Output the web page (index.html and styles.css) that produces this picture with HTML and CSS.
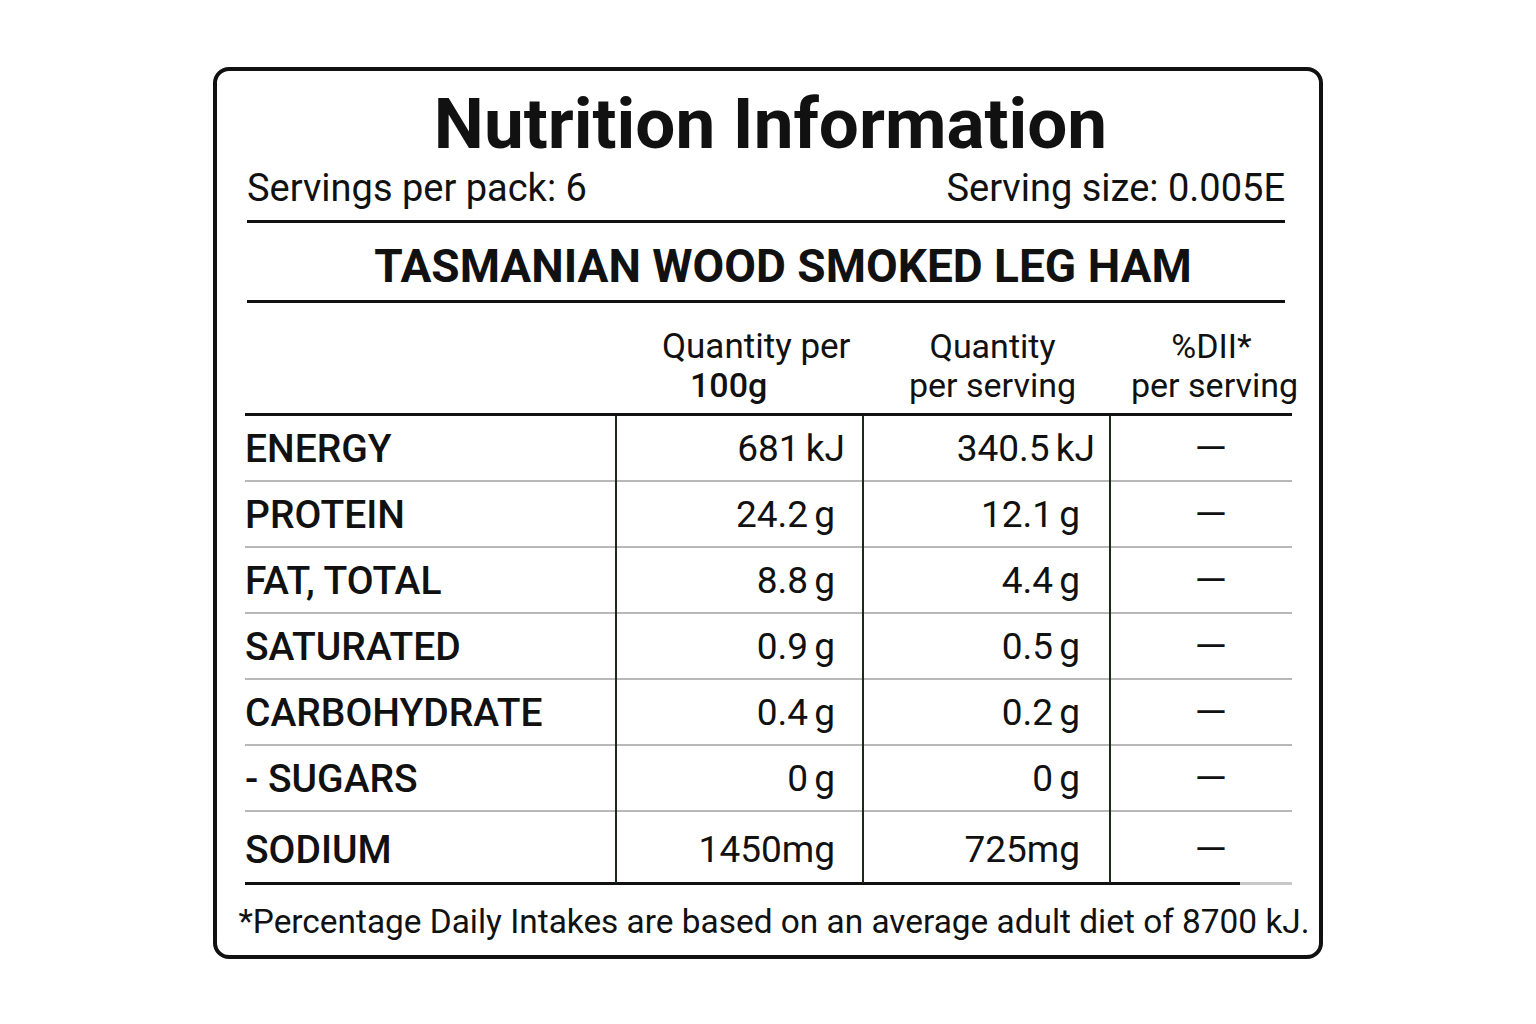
FILE: index.html
```html
<!DOCTYPE html>
<html lang="en">
<head>
<meta charset="utf-8">
<title>Nutrition Information</title>
<link rel="stylesheet" href="styles.css">
</head>
<body>
<div class="card">
  <h1 class="title">Nutrition Information</h1>
  <div class="servings"><span>Servings per pack: 6</span><span>Serving size: 0.005E</span></div>
  <div class="product">TASMANIAN WOOD SMOKED LEG HAM</div>
  <div class="table">
    <div class="head">
      <div></div>
      <div class="h h2"><span class="l1">Quantity per</span><span class="l2">100g</span></div>
      <div class="h h3">Quantity<br>per serving</div>
      <div class="h h4">%DII*<br>per serving</div>
    </div>
    <div class="row"><div class="lab">ENERGY</div><div class="v2 kj">681 kJ</div><div class="v3 kj">340.5 kJ</div><div class="v4"><span class="dash">–</span></div></div>
    <div class="row"><div class="lab">PROTEIN</div><div class="v2">24.2 g</div><div class="v3">12.1 g</div><div class="v4"><span class="dash">–</span></div></div>
    <div class="row"><div class="lab">FAT, TOTAL</div><div class="v2">8.8 g</div><div class="v3">4.4 g</div><div class="v4"><span class="dash">–</span></div></div>
    <div class="row"><div class="lab">SATURATED</div><div class="v2">0.9 g</div><div class="v3">0.5 g</div><div class="v4"><span class="dash">–</span></div></div>
    <div class="row"><div class="lab">CARBOHYDRATE</div><div class="v2">0.4 g</div><div class="v3">0.2 g</div><div class="v4"><span class="dash">–</span></div></div>
    <div class="row"><div class="lab">- SUGARS</div><div class="v2">0 g</div><div class="v3">0 g</div><div class="v4"><span class="dash">–</span></div></div>
    <div class="row last"><div class="lab">SODIUM</div><div class="v2">1450mg</div><div class="v3">725mg</div><div class="v4"><span class="dash">–</span></div></div>
    <div class="tline"></div>
  </div>
  <p class="note">*Percentage Daily Intakes are based on an average adult diet of 8700 kJ.</p>
</div>
</body>
</html>
```

FILE: styles.css
```css
body {
  margin: 0;
  background: #fff;
  font-family: Roboto, "Liberation Sans", Arial, sans-serif;
  color: #111;
}

.card {
  box-sizing: border-box;
  width: 1110px;
  height: 892px;
  margin: 67px 0 0 213px;
  border: 4px solid #111;
  border-radius: 16px;
  padding: 18px 27px 0 28px;
}

.title {
  margin: 0;
  font-size: 71px;
  line-height: 70px;
  font-weight: 700;
  text-align: center;
  padding-left: 4px;
}

.servings {
  display: flex;
  justify-content: space-between;
  margin: 9px 7px 0 2px;
  font-size: 38px;
  line-height: 40px;
  padding-bottom: 12px;
  border-bottom: 3px solid #111;
}

.product {
  margin: 0 7px 0 2px;
  padding: 15px 0 6px 34px;
  font-size: 46px;
  line-height: 56px;
  font-weight: 700;
  text-align: center;
  border-bottom: 3px solid #111;
}

.head,
.row {
  display: grid;
  grid-template-columns: 370px 247px 247px 183px;
}

.head {
  padding: 24px 0 8px;
  border-bottom: 3px solid #111;
  font-size: 34px;
  line-height: 39px;
}

.h {
  white-space: nowrap;
}

.h2 {
  padding-left: 47px;
  font-size: 35px;
}

.h2 .l1,
.h2 .l2 {
  display: block;
}

.h2 .l2 {
  padding-left: 28px;
  font-weight: 500;
  font-size: 34px;
}

.h3 {
  text-align: center;
  padding-left: 14px;
}

.h4 {
  text-align: center;
  padding-left: 22px;
}

.row {
  box-sizing: border-box;
  height: 66px;
  border-bottom: 2px solid #b8b8b8;
}

.row > div {
  line-height: 66px;
}

.row.last {
  height: 70px;
  border-bottom: none;
}

.row.last > div {
  padding-top: 5px;
}

.lab {
  font-size: 39px;
  font-weight: 500;
  white-space: nowrap;
}

.v2,
.v3,
.v4 {
  font-size: 37px;
  word-spacing: -3px;
  border-left: 2px solid #1c2a1c;
}

.v2 {
  text-align: right;
  padding-right: 27px;
}

.v3 {
  text-align: right;
  padding-right: 29px;
}

.v2.kj {
  padding-right: 17px;
}

.v3.kj {
  padding-right: 14px;
}

.v4 {
  text-align: center;
  padding-left: 20px;
}

.dash {
  display: inline-block;
  transform: scaleX(1.5);
}

.tline {
  height: 3px;
  background: linear-gradient(to right, #111 0, #111 995px, #c8c8c8 995px);
}

.note {
  margin: 17px -40px 0 -30px;
  padding-left: 1px;
  font-size: 33.4px;
  line-height: 40px;
  text-align: center;
  white-space: nowrap;
}
```
